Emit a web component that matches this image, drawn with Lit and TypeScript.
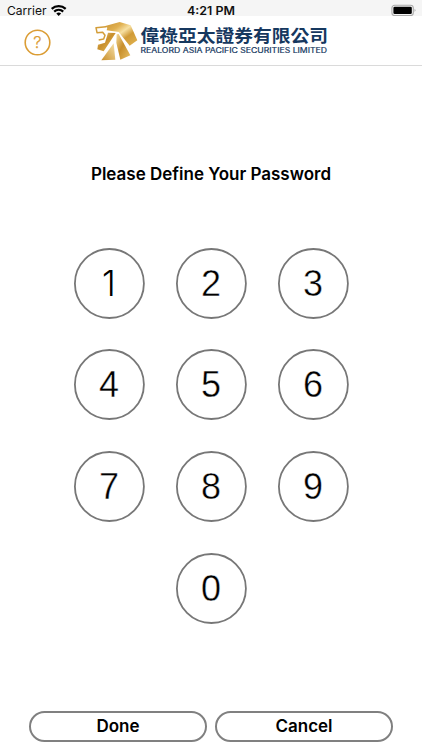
import { LitElement, html, css, svg } from "lit";
import { customElement, property } from "lit/decorators.js";

@customElement("status-bar")
class StatusBar extends LitElement {
  static styles = css`
    :host { display: block; height: 16px; background: #f5f5f5; }
    svg { display: block; }
    text { font-family: Inter, "Liberation Sans", sans-serif; font-size: 12px; fill: #111; }
    .time { font-weight: 600; font-size: 11.5px; }
  `;
  render() {
    return html`<svg width="422" height="22" viewBox="0 0 422 22">
      <text x="7" y="15" textLength="39.5" lengthAdjust="spacingAndGlyphs">Carrier</text>
      <g fill="none" stroke="#000" stroke-width="2.2">
        <path d="M51.7 8.9a10.2 10.2 0 0 1 14 0" />
        <path d="M54.2 11.6a6.4 6.4 0 0 1 9 0" />
      </g>
      <path d="M56.3 13.5a3.6 3.6 0 0 1 4.8 0L58.7 16z" />
      <text class="time" x="187" y="15" textLength="48" lengthAdjust="spacingAndGlyphs">4:21 PM</text>
      <rect x="391.9" y="5.2" width="21.4" height="10.4" rx="2.8" fill="#f5f5f5" stroke="#aaa" stroke-width="1.1" />
      <rect x="393.4" y="6.7" width="18.4" height="7.4" rx="1.3" />
      <path d="M414.7 8.8q1.6 1.5 0 3.1z" fill="#888" />
    </svg>`;
  }
}

@customElement("brand-header")
class BrandHeader extends LitElement {
  static styles = css`
    :host {
      display: flex; height: 49px; box-sizing: content-box;
      border-bottom: 1px solid #dadada; background: #fff;
    }
    .help { margin: 13px 0 0 24px; width: 27px; height: 27px; }
    .logo { margin: 4px 0 0 43px; width: 236px; height: 44px; }
    .q { font: 300 16.5px Inter, sans-serif; fill: #db9d35; stroke: #db9d35; stroke-width: 0.25px; text-anchor: middle; }
    .zh { font: 700 17.4px "Noto Sans CJK TC", sans-serif; fill: #16385f; }
    .en { font: 400 7.3px/1 Inter, sans-serif; fill: #16385f; stroke: #16385f; stroke-width: 0.2px; }
  `;
  render() {
    return html`
      <svg class="help" viewBox="0 0 27 27">
        <circle cx="13.5" cy="13.5" r="12.3" fill="none" stroke="#db9d35" stroke-width="1.6" />
        <text class="q" x="13.5" y="19.2">?</text>
      </svg>
      <svg class="logo" viewBox="94 20 236 44">
        <defs>
          <linearGradient id="mane" x1="0" y1="0" x2="1" y2="1">
            <stop offset="0" stop-color="#c99233" />
            <stop offset=".3" stop-color="#e0b050" />
            <stop offset=".48" stop-color="#f7e0a2" />
            <stop offset=".66" stop-color="#d09a36" />
            <stop offset="1" stop-color="#e3b552" />
          </linearGradient>
          <linearGradient id="leg" x1="0" y1="0" x2="1" y2="1">
            <stop offset="0" stop-color="#f4da98" />
            <stop offset=".45" stop-color="#c88f2c" />
            <stop offset="1" stop-color="#e8c063" />
          </linearGradient>
          <linearGradient id="paw" x1="1" y1="0" x2="0" y2="1">
            <stop offset="0" stop-color="#f6e2ab" />
            <stop offset="1" stop-color="#c98e29" />
          </linearGradient>
        </defs>
        ${svg`
        <g transform="translate(90 18) scale(.3333)">
          <path fill="url(#mane)" d="M43 25L89 12L122 22L142 67L119 83L86 42L50 37L52 29z" />
          <path fill="url(#leg)" d="M80 49L86 48L121 112L91 125L79 74z" />
          <path fill="url(#paw)" d="M71 76L76 125L34 127z" />
          <path fill="url(#leg)" d="M54 44L77 45L56 77L41 100L22 94L24 80L45 74z" />
          <path fill="none" stroke="#d39d38" stroke-width="4.5" stroke-linejoin="round"
            d="M48 26L18 29L21 44L38 43L45 52L41 63L26 66" />
        </g>
        `}
        <text class="zh" x="140.5" y="41.7" textLength="187.5" lengthAdjust="spacingAndGlyphs">偉祿亞太證券有限公司</text>
        <text class="en" x="140.5" y="53.2" textLength="186.5" lengthAdjust="spacingAndGlyphs">REALORD ASIA PACIFIC SECURITIES LIMITED</text>
      </svg>`;
  }
}

@customElement("digit-key")
class DigitKey extends LitElement {
  @property() value = "";
  static styles = css`
    :host { display: block; width: 71px; height: 71px; }
    .key { display: block; width: 71px; height: 71px; padding: 0; border: 0; background: none; }
    svg { display: block; }
    circle { fill: #fff; stroke: #777; stroke-width: 1.8px; }
    /* A white outline thins the regular weight down to a light one. */
    text { font: 36px "Liberation Sans", sans-serif; text-anchor: middle; stroke: #fff; stroke-width: 0.4px; }
    .plain { font: 300 35px Inter, sans-serif; stroke: none; }
  `;
  render() {
    return html`<button class="key">
      <svg width="71" height="71" viewBox="0 0 71 71">
        <circle cx="35.4" cy="35.5" r="34.5" />
        <text class=${this.value === "1" ? "plain" : ""} x="35" y="48.2">${this.value}</text>
      </svg>
    </button>`;
  }
}

@customElement("app-root")
class AppRoot extends LitElement {
  static styles = css`
    :host {
      display: flex; flex-direction: column; width: 422px; height: 750px;
      background: #fff; overflow: hidden; color: #000;
      font-family: Inter, "Liberation Sans", sans-serif;
    }
    status-bar, brand-header { flex: none; }
    .title {
      margin: 97px 0 0; height: 22px; text-align: center;
      font-size: 17px; line-height: 22px; font-weight: 600;
    }
    .pad {
      display: grid; grid-template-columns: repeat(3, 71px); justify-content: center;
      column-gap: 31px; row-gap: 30.4px; margin-top: 63px;
    }
    .zero { grid-column: 2; margin-top: 1px; }
    .actions { display: flex; gap: 8px; justify-content: center; margin: auto 0 8px; }
    .action {
      box-sizing: border-box; width: 178px; height: 31px; padding: 0;
      border: 2px solid #808080; border-radius: 16px; background: #fff; color: #000;
      font: 600 17px/1 Inter, "Liberation Sans", sans-serif;
    }
  `;
  render() {
    return html`
      <status-bar></status-bar>
      <brand-header></brand-header>
      <h1 class="title">Please Define Your Password</h1>
      <div class="pad">
        ${["1", "2", "3", "4", "5", "6", "7", "8", "9", "0"].map(
          (d) => html`<digit-key class=${d === "0" ? "zero" : ""} .value=${d}></digit-key>`
        )}
      </div>
      <div class="actions">
        <button class="action">Done</button>
        <button class="action">Cancel</button>
      </div>`;
  }
}
